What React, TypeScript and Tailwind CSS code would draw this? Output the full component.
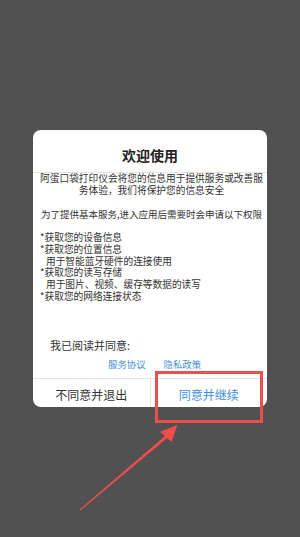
import React from "react";

const font = { fontFamily: '"Noto Sans CJK SC", "Noto Sans", sans-serif' };

const permissions = [
  { text: "*获取您的设备信息", sub: false },
  { text: "*获取您的位置信息", sub: false },
  { text: "用于智能蓝牙硬件的连接使用", sub: true },
  { text: "*获取您的读写存储", sub: false },
  { text: "用于图片、视频、缓存等数据的读写", sub: true },
  { text: "*获取您的网络连接状态", sub: false },
];

function PrivacyDialog() {
  return (
    <div className="w-[234px] bg-white rounded-[8px] flex flex-col text-[#333333] overflow-hidden">
      <h2 className="pt-[17px] pb-[9px] text-center text-[14px] leading-[16px] font-bold text-[#222222]">
        欢迎使用
      </h2>
      <div className="border-t border-[#e4e4e4]"></div>

      <div className="pl-[6px] pr-[3px] text-[9.7px] leading-[11.8px] whitespace-nowrap">
        <p className="text-center">
          阿蛋口袋打印仪会将您的信息用于提供服务或改善服
          <br />
          务体验，我们将保护您的信息安全
        </p>
        <p className="text-center mt-[11.8px] text-[9.5px]">为了提供基本服务,进入应用后需要时会申请以下权限</p>
        <div className="mt-[11.8px] pl-[1px]">
          {permissions.map((item, idx) => (
            <p key={idx} className={item.sub ? "pl-[6px]" : ""}>
              {item.text}
            </p>
          ))}
        </div>
      </div>

      <p className="mt-[36px] pl-[17px] text-[11px] leading-[13px]">我已阅读并同意:</p>
      <div className="flex gap-[18px] pl-[75px] mt-[6px] pb-[8px] text-[9.4px] leading-[12px] text-[#3f8fe0]">
        <span>服务协议</span>
        <span>隐私政策</span>
      </div>

      <div className="flex border-t border-[#e4e4e4] h-[29px]">
        <button className="flex-1 pt-[4px] text-[12px] text-[#333333] border-r border-[#e4e4e4]">
          不同意并退出
        </button>
        <button className="flex-1 pt-[4px] text-[12px] text-[#3f8fe0]">同意并继续</button>
      </div>
    </div>
  );
}

export default function App() {
  return (
    <div className="relative w-[300px] h-[537px] bg-[#515151] flex items-center justify-center overflow-hidden" style={font}>
      <PrivacyDialog />

      {/* highlight box */}
      <div className="absolute left-[155px] top-[371px] w-[108px] h-[52px] border-[3px] border-[#f04d4d]"></div>

      {/* arrow */}
      <svg className="absolute left-0 top-0" width="300" height="537" viewBox="0 0 300 537">
        <polygon
          points="79.6,509.6 165,436 160,431.7 177.3,425 171.7,441.7 167,438.2 80.4,510.4"
          fill="#f04d4d"
        />
      </svg>
    </div>
  );
}
